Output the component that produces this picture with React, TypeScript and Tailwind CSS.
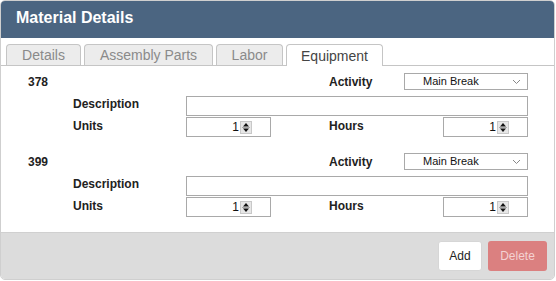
import React from "react";

const font = { fontFamily: '"Liberation Sans", Arial, sans-serif' };

function Spinner() {
  return (
    <div className="flex h-[13px] w-[12px] flex-col items-center justify-center border border-[#c8c8c8] bg-[#e6e6e6]">
      <svg width="8" height="11" viewBox="0 0 8 11">
        <polygon points="4,1 7,4.5 1,4.5" fill="#111" />
        <line x1="0" y1="5.5" x2="8" y2="5.5" stroke="#aaa" strokeWidth="1" />
        <polygon points="1,6.5 7,6.5 4,10" fill="#111" />
      </svg>
    </div>
  );
}

function NumberBox() {
  return (
    <div className="flex h-[20px] w-[85px] items-center justify-end border border-[#a9a9a9] bg-white pr-[18px] text-[12px] text-[#111]">
      <span className="mr-[1px]">1</span>
      <Spinner />
    </div>
  );
}

function SelectBox() {
  return (
    <div className="flex h-[17px] w-[124px] items-center border border-[#a9a9a9] bg-white pl-[18px] pr-[6px] text-[11px] text-[#111]">
      <span className="flex-1">Main Break</span>
      <svg width="9" height="6" viewBox="0 0 9 6">
        <polyline points="1,1 4.5,4.5 8,1" fill="none" stroke="#888" strokeWidth="1" />
      </svg>
    </div>
  );
}

function Group({ id }: { id: string }) {
  return (
    <div className="flex flex-col">
      <div className="flex h-[17px] items-center pl-[27px]">
        <span className="w-[301px] text-[12px] font-bold text-[#222]">{id}</span>
        <span className="w-[75px] text-[12px] font-bold text-[#222]">Activity</span>
        <SelectBox />
      </div>
      <div className="mt-[6px] flex h-[20px] items-center pl-[72px]">
        <span className="w-[113px] -translate-y-[2px] text-[12px] font-bold text-[#222]">Description</span>
        <div className="h-[20px] w-[342px] border border-[#a9a9a9] bg-white" />
      </div>
      <div className="mt-[1px] flex h-[20px] items-center pl-[72px]">
        <span className="w-[113px] -translate-y-[1px] text-[12px] font-bold text-[#222]">Units</span>
        <NumberBox />
        <span className="w-[58px]" />
        <span className="w-[114px] -translate-y-[1px] text-[12px] font-bold text-[#222]">Hours</span>
        <NumberBox />
      </div>
    </div>
  );
}

function Tab({ label, w, active }: { label: string; w: string; active?: boolean }) {
  return (
    <div
      className={
        active
          ? `relative -mb-px flex h-[22px] ${w} items-center justify-center rounded-t-[4px] border border-b-0 border-[#c5c5c5] bg-white pt-[1px] text-[14px] text-[#444]`
          : `flex h-[21px] ${w} items-center justify-center rounded-t-[4px] border border-b-0 border-[#c5c5c5] bg-[#ececec] pt-[1px] text-[14px] text-[#8a8a8a]`
      }
    >
      {label}
    </div>
  );
}

export default function App() {
  return (
    <div className="h-[281px] w-[556px] bg-white" style={font}>
      <div className="flex h-[280px] w-[555px] flex-col overflow-hidden rounded-[5px] border border-[#cfcfcf] bg-white">
        <div className="h-[37px] shrink-0 bg-[#4b6581] pl-[15px] pt-[5px] text-[16px] font-bold text-white">
          Material Details
        </div>
        <div className="flex flex-1 flex-col pt-[7px]">
          <div className="flex h-[21px] items-end gap-[3px] border-b border-[#c5c5c5] pl-[5px]">
            <Tab label="Details" w="w-[75px]" />
            <Tab label="Assembly Parts" w="w-[129px]" />
            <Tab label="Labor" w="w-[67px]" />
            <Tab label="Equipment" w="w-[97px]" active />
          </div>
          <div className="flex flex-col gap-[16px] pt-[7px]">
            <Group id="378" />
            <Group id="399" />
          </div>
        </div>
        <div className="flex h-[47px] shrink-0 items-center justify-end gap-[6px] border-t border-[#d0d0d0] bg-[#dcdcdc] pr-[7px]">
          <button className="h-[30px] w-[44px] rounded-[3px] border border-[#d6d6d6] bg-white text-[12px] text-[#222]">
            Add
          </button>
          <button className="h-[30px] w-[59px] rounded-[3px] bg-[#db8080] text-[12px] text-[#f4d2d2]">
            Delete
          </button>
        </div>
      </div>
    </div>
  );
}
